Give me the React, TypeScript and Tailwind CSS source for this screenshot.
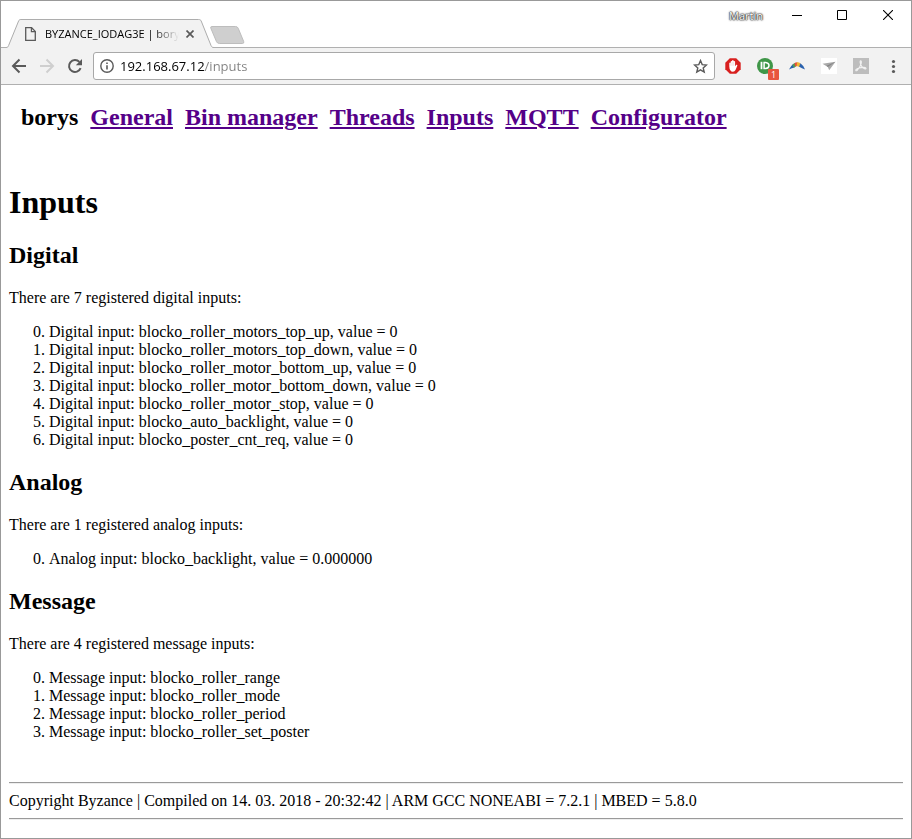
import React from "react";

const navLinks = ["General", "Bin manager", "Threads", "Inputs", "MQTT", "Configurator"];

const digitalInputs = [
  "blocko_roller_motors_top_up",
  "blocko_roller_motors_top_down",
  "blocko_roller_motor_bottom_up",
  "blocko_roller_motor_bottom_down",
  "blocko_roller_motor_stop",
  "blocko_auto_backlight",
  "blocko_poster_cnt_req",
];

const messageInputs = [
  "blocko_roller_range",
  "blocko_roller_mode",
  "blocko_roller_period",
  "blocko_roller_set_poster",
];

function TitleBar() {
  return (
    <div className="relative flex h-[47px] items-start border-b border-[#b0b0b0] bg-white">
      <div className="relative -mb-px ml-[5px] mt-[18px] flex h-[29px] w-[208px] shrink-0 items-center pl-[19px]">
        <svg className="absolute inset-0 h-full w-full" viewBox="0 0 208 29" preserveAspectRatio="none" aria-hidden="true">
          <path d="M0 28.5 C1.5 28.5 2 28 2.6 26.5 L12.6 2 C13.2 0.8 13.6 0.5 15 0.5 H192.5 C194 0.5 194.6 0.8 195.2 2 L205 26.5 C205.6 28 206.5 28.5 208 28.5 V29 H0 Z" fill="#f2f2f2" />
          <path d="M0 28.5 C1.5 28.5 2 28 2.6 26.5 L12.6 2 C13.2 0.8 13.6 0.5 15 0.5 H192.5 C194 0.5 194.6 0.8 195.2 2 L205 26.5 C205.6 28 206.5 28.5 208 28.5" fill="none" stroke="#adadad" />
        </svg>
        <svg className="relative h-[14px] w-[11px] shrink-0" viewBox="0 0 11 14" fill="none" stroke="#5a5a5a" aria-hidden="true">
          <path d="M0.7 0.7 H6.6 L10.3 4.4 V13.3 H0.7 Z" strokeWidth="1.3" />
          <path d="M6.4 0.7 V4.6 H10.3" strokeWidth="1.2" />
        </svg>
        <span className="relative ml-[9px] w-[134px] overflow-hidden whitespace-nowrap font-['Open_Sans',sans-serif] text-[11px] leading-4 text-black [mask-image:linear-gradient(to_right,black_108px,transparent_134px)]">
          BYZANCE_IODAG3E | bory
        </span>
        <button type="button" aria-label="Close tab" className="relative ml-[3px] flex h-4 w-4 items-center justify-center">
          <svg className="h-2 w-2" viewBox="0 0 8 8" stroke="#5a5a5a" strokeWidth="1.7" aria-hidden="true">
            <path d="M0.5 0.5 L7.5 7.5 M7.5 0.5 L0.5 7.5" />
          </svg>
        </button>
      </div>
      <button type="button" aria-label="New tab" className="-ml-[5px] mt-[25px] h-[18px] w-[36px]">
        <svg className="h-full w-full" viewBox="0 0 36 18" aria-hidden="true">
          <path d="M3 0.5 H26.5 Q28.5 0.5 29.2 2.2 L34.7 15.5 Q35.3 17.5 33.5 17.5 H10.5 Q8.3 17.5 7.5 15.7 L1.8 2.2 Q1.2 0.5 3 0.5 Z" fill="#cfcfcf" stroke="#bdbdbd" />
        </svg>
      </button>
      <div className="ml-auto flex items-start">
        <span className="mr-3 mt-[7px] font-['Open_Sans',sans-serif] text-[11px] leading-4 text-white [text-shadow:0_0_1px_#333,0_0_1px_#333,0_0_2px_#333,0_0_2px_#555]">
          Martin
        </span>
        <button type="button" aria-label="Minimize" className="flex h-[28px] w-[45px] items-center justify-center pr-px">
          <svg className="h-[10px] w-[10px]" viewBox="0 0 10 10" stroke="#000" aria-hidden="true"><path d="M0 5.5 H10" /></svg>
        </button>
        <button type="button" aria-label="Maximize" className="flex h-[28px] w-[45px] items-center justify-center pr-px">
          <svg className="h-[10px] w-[10px]" viewBox="0 0 10 10" fill="none" stroke="#000" aria-hidden="true"><path d="M0.5 0.5 H9.5 V9.5 H0.5 Z" /></svg>
        </button>
        <button type="button" aria-label="Close" className="flex h-[28px] w-[46px] items-center justify-center">
          <svg className="h-[10px] w-[10px]" viewBox="0 0 10 10" stroke="#000" strokeWidth="1.1" aria-hidden="true"><path d="M0 0 L10 10 M10 0 L0 10" /></svg>
        </button>
      </div>
    </div>
  );
}

function Toolbar() {
  return (
    <div className="flex h-[37px] items-center border-b border-[#b0b0b0] bg-[#f2f2f2] pr-[10px] pl-[10px]">
      <button type="button" aria-label="Back" className="h-4 w-4">
        <svg viewBox="0 0 16 16" fill="none" stroke="#5a5a5a" strokeWidth="2" aria-hidden="true"><path d="M15 8 H2.5 M8.5 1.5 L2 8 L8.5 14.5" /></svg>
      </button>
      <button type="button" aria-label="Forward" className="ml-3 h-4 w-4">
        <svg viewBox="0 0 16 16" fill="none" stroke="#cfcfcf" strokeWidth="2" aria-hidden="true"><path d="M1 8 H13.5 M7.5 1.5 L14 8 L7.5 14.5" /></svg>
      </button>
      <button type="button" aria-label="Reload" className="ml-3 h-4 w-4">
        <svg viewBox="0 0 16 16" aria-hidden="true">
          <path d="M13.6 10.2 A6 6 0 1 1 12.4 3.9" fill="none" stroke="#5a5a5a" strokeWidth="2" />
          <path d="M15 1 V7.2 H8.8 Z" fill="#5a5a5a" />
        </svg>
      </button>
      <div className="ml-[10px] flex h-[28px] min-w-0 flex-1 items-center rounded-[3px] border border-[#a8a8a8] bg-white pr-[6px] pl-[6px]">
        <svg className="h-[14px] w-[14px] shrink-0" viewBox="0 0 14 14" fill="none" stroke="#5a5a5a" aria-hidden="true">
          <circle cx="7" cy="7" r="6.2" strokeWidth="1.4" />
          <path d="M7 6.2 V10.5 M7 3.4 V5" strokeWidth="1.6" />
        </svg>
        <input
          type="text"
          aria-label="Address"
          defaultValue="192.168.67.12/inputs"
          className="ml-[6px] h-5 min-w-0 flex-1 bg-[linear-gradient(to_right,#000_85px,#808080_85px)] bg-clip-text font-['Open_Sans',sans-serif] text-[13px] leading-5 text-transparent outline-none"
        />
        <button type="button" aria-label="Bookmark this page" className="h-[15px] w-[15px] shrink-0">
          <svg viewBox="0 0 15 15" fill="none" stroke="#5a5a5a" strokeWidth="1.4" aria-hidden="true">
            <path d="M7.5 1.6 L9.2 5.6 L13.5 6 L10.2 8.9 L11.2 13.1 L7.5 10.8 L3.8 13.1 L4.8 8.9 L1.5 6 L5.8 5.6 Z" />
          </svg>
        </button>
      </div>
      <div className="ml-[10px] flex items-center gap-4">
        <button type="button" aria-label="Ad blocker" className="h-4 w-4">
          <svg viewBox="0 0 16 16" aria-hidden="true">
            <path d="M4.8 0.3 H11.2 L15.7 4.8 V11.2 L11.2 15.7 H4.8 L0.3 11.2 V4.8 Z" fill="#d8201f" />
            <path d="M4.3 8.5 V5 Q5 4.2 5.7 5 V3.4 Q6.4 2.5 7.1 3.3 V2.5 Q7.9 1.7 8.6 2.6 V3.3 Q9.4 2.6 10.1 3.6 V8.2 L11.3 6.8 Q12.5 6.4 12.3 7.7 L10.5 12 Q9.7 13.8 7.9 13.8 Q4.5 13.6 4.3 8.5 Z" fill="#fff" />
            <path d="M5.8 5 V7.8 M7.2 4 V7.8 M8.7 4 V7.8" stroke="#ddb5b5" strokeWidth="0.4" />
          </svg>
        </button>
        <button type="button" aria-label="Pushbullet, 1 notification" className="relative h-4 w-4">
          <svg viewBox="0 0 16 16" aria-hidden="true">
            <circle cx="8" cy="8" r="8" fill="#3f9648" />
            <path d="M3.6 3.8 H5.4 V11.2 H3.6 Z" fill="#fff" />
            <path d="M7.1 4.5 H8.6 Q12 4.8 12 7.6 Q12 10.3 8.6 10.6 H7.1 Z" fill="none" stroke="#fff" strokeWidth="1.5" />
          </svg>
          <span className="absolute top-[11px] left-[11px] flex h-[11px] w-[11px] items-center justify-center rounded-[1px] bg-[#e8553f] font-['Open_Sans',sans-serif] text-[9px] leading-[11px] text-white">1</span>
        </button>
        <button type="button" aria-label="Rainbow extension" className="h-4 w-4">
          <svg viewBox="0 0 16 16" aria-hidden="true">
            <path d="M0 11.5 Q1.4 8.2 4.2 6 L5.6 9.6 Q2.8 10.3 0 11.5 Z" fill="#2a61ad" />
            <path d="M3.4 6.7 Q4.8 5.2 6.4 4.7 L7.3 8.2 L4.8 9.8 Z" fill="#4f9b58" />
            <path d="M5.4 5.2 Q6.8 4.2 8.5 4.3 L8 8.1 L6.3 8.5 Z" fill="#e6513c" />
            <path d="M8 4.3 Q10 4.1 11.6 5.5 L10.3 8.9 L7.7 8.1 Z" fill="#f2b632" />
            <path d="M11.4 5.3 Q14.6 7.6 16 11.4 Q13 10.5 10.1 8.8 Z" fill="#2a61ad" />
          </svg>
        </button>
        <button type="button" aria-label="Send" className="h-4 w-4 bg-white">
          <svg viewBox="0 0 16 16" aria-hidden="true">
            <path d="M1.5 5.7 L14.5 3.8 L8.2 12.2 L6.8 9 Z" fill="#a9a9a9" />
            <path d="M6.8 9 L14.5 3.8 L5.5 7.8 Z" fill="#858585" />
          </svg>
        </button>
        <button type="button" aria-label="PDF tools" className="h-4 w-4">
          <svg viewBox="0 0 16 16" fill="none" aria-hidden="true">
            <rect width="16" height="16" fill="#bdbdbd" />
            <path d="M7.2 2.8 Q8.8 2.2 8.2 5.3 Q7.2 9.2 4 12.5 Q2.4 13.3 2.9 11.7 Q5.2 9.5 10.8 9.4 Q13.8 9.7 12.7 11 Q9.8 10.8 7.8 6.7 Q6.8 4 7.2 2.8" stroke="#f2f2f2" strokeWidth="1.1" />
          </svg>
        </button>
        <button type="button" aria-label="Menu" className="h-4 w-4">
          <svg viewBox="0 0 16 16" fill="#5a5a5a" aria-hidden="true">
            <circle cx="8.5" cy="3.5" r="1.6" />
            <circle cx="8.5" cy="8.5" r="1.6" />
            <circle cx="8.5" cy="13.5" r="1.6" />
          </svg>
        </button>
      </div>
    </div>
  );
}

function InputList({ items }: { items: string[] }) {
  return (
    <ol start={0} className="mt-4 list-decimal pl-10">
      {items.map((item) => (
        <li key={item}>{item}</li>
      ))}
    </ol>
  );
}

export default function App() {
  return (
    <div className="min-h-screen border border-[#999] bg-white">
      <TitleBar />
      <Toolbar />
      <div className="px-2 pt-[19px] pb-[18px] font-['Liberation_Serif',serif] text-[16px] leading-[18px] text-black">
        <nav className="flex flex-wrap gap-x-3 pl-3 text-[24px] leading-[27px] font-bold">
          <span>borys</span>
          {navLinks.map((label) => (
            <a key={label} href="#" className="text-[#550088] underline">
              {label}
            </a>
          ))}
        </nav>
        <main>
          <h1 className="mt-[53px] text-[32px] leading-[36px] font-bold">Inputs</h1>
          <h2 className="mt-[22px] text-[24px] leading-[27px] font-bold">Digital</h2>
          <p className="mt-5">There are 7 registered digital inputs:</p>
          <InputList items={digitalInputs.map((name) => `Digital input: ${name}, value = 0`)} />
          <h2 className="mt-5 text-[24px] leading-[27px] font-bold">Analog</h2>
          <p className="mt-5">There are 1 registered analog inputs:</p>
          <InputList items={["Analog input: blocko_backlight, value = 0.000000"]} />
          <h2 className="mt-5 text-[24px] leading-[27px] font-bold">Message</h2>
          <p className="mt-5">There are 4 registered message inputs:</p>
          <InputList items={messageInputs.map((name) => `Message input: ${name}`)} />
        </main>
        <footer className="mt-[41px]">
          <hr className="border-t border-b border-t-[#9a9a9a] border-b-[#eee]" />
          <p className="my-2">Copyright Byzance | Compiled on 14. 03. 2018 - 20:32:42 | ARM GCC NONEABI = 7.2.1 | MBED = 5.8.0</p>
          <hr className="border-t border-b border-t-[#9a9a9a] border-b-[#eee]" />
        </footer>
      </div>
    </div>
  );
}
